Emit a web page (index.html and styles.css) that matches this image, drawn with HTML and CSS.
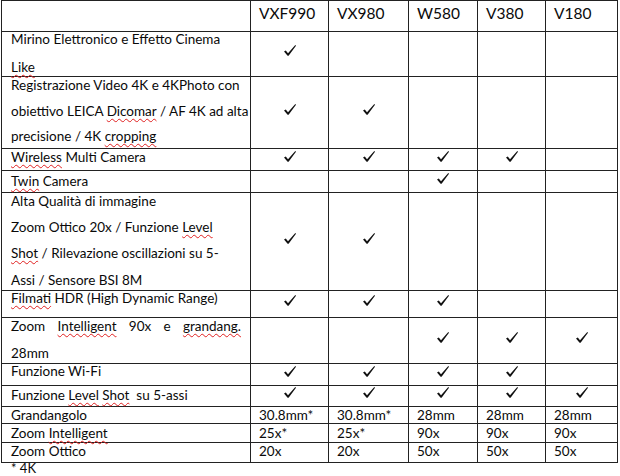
FILE: index.html
```html
<!DOCTYPE html>
<html lang="it">
<head>
<meta charset="utf-8">
<title>Confronto modelli</title>
<link rel="stylesheet" href="styles.css">
</head>
<body>
<div class="sheet">
  <div class="grid">
    <div class="c hd"></div>
    <div class="c hd"><div class="t">VXF990</div></div>
    <div class="c hd"><div class="t">VX980</div></div>
    <div class="c hd"><div class="t">W580</div></div>
    <div class="c hd"><div class="t">V380</div></div>
    <div class="c hd"><div class="t">V180</div></div>

    <div class="c r1"><div class="t">Mirino Elettronico e Effetto Cinema<br><span class="sp">Like</span></div></div>
    <div class="c k"><svg class="ck" viewBox="0 0 12 11"><path d="M0 6.5 L1.8 5.5 L4 8.2 L11.3 0 L12 0.7 L4.6 10.8 L3.6 10.8 Z"/></svg></div>
    <div class="c"></div><div class="c"></div><div class="c"></div><div class="c"></div>

    <div class="c r2"><div class="t">Registrazione Video 4K e 4KPhoto con<br>obiettivo LEICA <span class="sp">Dicomar</span> / AF 4K ad alta<br>precisione / 4K <span class="sp">cropping</span></div></div>
    <div class="c k"><svg class="ck" viewBox="0 0 12 11"><path d="M0 6.5 L1.8 5.5 L4 8.2 L11.3 0 L12 0.7 L4.6 10.8 L3.6 10.8 Z"/></svg></div>
    <div class="c k"><svg class="ck" viewBox="0 0 12 11"><path d="M0 6.5 L1.8 5.5 L4 8.2 L11.3 0 L12 0.7 L4.6 10.8 L3.6 10.8 Z"/></svg></div>
    <div class="c"></div><div class="c"></div><div class="c"></div>

    <div class="c r3"><div class="t"><span class="sp">Wireless</span> Multi Camera</div></div>
    <div class="c k"><svg class="ck" viewBox="0 0 12 11"><path d="M0 6.5 L1.8 5.5 L4 8.2 L11.3 0 L12 0.7 L4.6 10.8 L3.6 10.8 Z"/></svg></div>
    <div class="c k"><svg class="ck" viewBox="0 0 12 11"><path d="M0 6.5 L1.8 5.5 L4 8.2 L11.3 0 L12 0.7 L4.6 10.8 L3.6 10.8 Z"/></svg></div>
    <div class="c k"><svg class="ck" viewBox="0 0 12 11"><path d="M0 6.5 L1.8 5.5 L4 8.2 L11.3 0 L12 0.7 L4.6 10.8 L3.6 10.8 Z"/></svg></div>
    <div class="c k"><svg class="ck" viewBox="0 0 12 11"><path d="M0 6.5 L1.8 5.5 L4 8.2 L11.3 0 L12 0.7 L4.6 10.8 L3.6 10.8 Z"/></svg></div>
    <div class="c"></div>

    <div class="c r4"><div class="t"><span class="sp">Twin</span> Camera</div></div>
    <div class="c"></div><div class="c"></div>
    <div class="c k"><svg class="ck" viewBox="0 0 12 11"><path d="M0 6.5 L1.8 5.5 L4 8.2 L11.3 0 L12 0.7 L4.6 10.8 L3.6 10.8 Z"/></svg></div>
    <div class="c"></div><div class="c"></div>

    <div class="c r5"><div class="t">Alta Qualità di immagine<br>Zoom Ottico 20x / Funzione <span class="sp">Level</span><br><span class="sp">Shot</span> / Rilevazione oscillazioni su 5-<br>Assi / Sensore BSI 8M</div></div>
    <div class="c k"><svg class="ck" viewBox="0 0 12 11"><path d="M0 6.5 L1.8 5.5 L4 8.2 L11.3 0 L12 0.7 L4.6 10.8 L3.6 10.8 Z"/></svg></div>
    <div class="c k"><svg class="ck" viewBox="0 0 12 11"><path d="M0 6.5 L1.8 5.5 L4 8.2 L11.3 0 L12 0.7 L4.6 10.8 L3.6 10.8 Z"/></svg></div>
    <div class="c"></div><div class="c"></div><div class="c"></div>

    <div class="c r6"><div class="t"><span class="sp">Filmati</span> HDR (High Dynamic Range)</div></div>
    <div class="c k"><svg class="ck" viewBox="0 0 12 11"><path d="M0 6.5 L1.8 5.5 L4 8.2 L11.3 0 L12 0.7 L4.6 10.8 L3.6 10.8 Z"/></svg></div>
    <div class="c k"><svg class="ck" viewBox="0 0 12 11"><path d="M0 6.5 L1.8 5.5 L4 8.2 L11.3 0 L12 0.7 L4.6 10.8 L3.6 10.8 Z"/></svg></div>
    <div class="c k"><svg class="ck" viewBox="0 0 12 11"><path d="M0 6.5 L1.8 5.5 L4 8.2 L11.3 0 L12 0.7 L4.6 10.8 L3.6 10.8 Z"/></svg></div>
    <div class="c"></div><div class="c"></div>

    <div class="c r7"><div class="t"><div class="just">Zoom <span class="sp">Intelligent</span> 90x e <span class="sp">grandang.</span></div><div>28mm</div></div></div>
    <div class="c"></div><div class="c"></div>
    <div class="c k"><svg class="ck" viewBox="0 0 12 11"><path d="M0 6.5 L1.8 5.5 L4 8.2 L11.3 0 L12 0.7 L4.6 10.8 L3.6 10.8 Z"/></svg></div>
    <div class="c k"><svg class="ck" viewBox="0 0 12 11"><path d="M0 6.5 L1.8 5.5 L4 8.2 L11.3 0 L12 0.7 L4.6 10.8 L3.6 10.8 Z"/></svg></div>
    <div class="c k"><svg class="ck" viewBox="0 0 12 11"><path d="M0 6.5 L1.8 5.5 L4 8.2 L11.3 0 L12 0.7 L4.6 10.8 L3.6 10.8 Z"/></svg></div>

    <div class="c r8"><div class="t">Funzione Wi-Fi</div></div>
    <div class="c k"><svg class="ck" viewBox="0 0 12 11"><path d="M0 6.5 L1.8 5.5 L4 8.2 L11.3 0 L12 0.7 L4.6 10.8 L3.6 10.8 Z"/></svg></div>
    <div class="c k"><svg class="ck" viewBox="0 0 12 11"><path d="M0 6.5 L1.8 5.5 L4 8.2 L11.3 0 L12 0.7 L4.6 10.8 L3.6 10.8 Z"/></svg></div>
    <div class="c k"><svg class="ck" viewBox="0 0 12 11"><path d="M0 6.5 L1.8 5.5 L4 8.2 L11.3 0 L12 0.7 L4.6 10.8 L3.6 10.8 Z"/></svg></div>
    <div class="c k"><svg class="ck" viewBox="0 0 12 11"><path d="M0 6.5 L1.8 5.5 L4 8.2 L11.3 0 L12 0.7 L4.6 10.8 L3.6 10.8 Z"/></svg></div>
    <div class="c"></div>

    <div class="c r9"><div class="t">Funzione <span class="sp">Level</span> <span class="sp">Shot</span> &nbsp;su 5-assi</div></div>
    <div class="c k"><svg class="ck" viewBox="0 0 12 11"><path d="M0 6.5 L1.8 5.5 L4 8.2 L11.3 0 L12 0.7 L4.6 10.8 L3.6 10.8 Z"/></svg></div>
    <div class="c k"><svg class="ck" viewBox="0 0 12 11"><path d="M0 6.5 L1.8 5.5 L4 8.2 L11.3 0 L12 0.7 L4.6 10.8 L3.6 10.8 Z"/></svg></div>
    <div class="c k"><svg class="ck" viewBox="0 0 12 11"><path d="M0 6.5 L1.8 5.5 L4 8.2 L11.3 0 L12 0.7 L4.6 10.8 L3.6 10.8 Z"/></svg></div>
    <div class="c k"><svg class="ck" viewBox="0 0 12 11"><path d="M0 6.5 L1.8 5.5 L4 8.2 L11.3 0 L12 0.7 L4.6 10.8 L3.6 10.8 Z"/></svg></div>
    <div class="c k"><svg class="ck" viewBox="0 0 12 11"><path d="M0 6.5 L1.8 5.5 L4 8.2 L11.3 0 L12 0.7 L4.6 10.8 L3.6 10.8 Z"/></svg></div>

    <div class="c r10"><div class="t">Grandangolo</div></div>
    <div class="c r10"><div class="t">30.8mm*</div></div>
    <div class="c r10"><div class="t">30.8mm*</div></div>
    <div class="c r10"><div class="t">28mm</div></div>
    <div class="c r10"><div class="t">28mm</div></div>
    <div class="c r10"><div class="t">28mm</div></div>

    <div class="c r11"><div class="t">Zoom <span class="sp">Intelligent</span></div></div>
    <div class="c r11"><div class="t">25x*</div></div>
    <div class="c r11"><div class="t">25x*</div></div>
    <div class="c r11"><div class="t">90x</div></div>
    <div class="c r11"><div class="t">90x</div></div>
    <div class="c r11"><div class="t">90x</div></div>

    <div class="c r12"><div class="t">Zoom Ottico</div></div>
    <div class="c r12"><div class="t">20x</div></div>
    <div class="c r12"><div class="t">20x</div></div>
    <div class="c r12"><div class="t">50x</div></div>
    <div class="c r12"><div class="t">50x</div></div>
    <div class="c r12"><div class="t">50x</div></div>
  </div>
  <p class="note">* 4K</p>
</div>
</body>
</html>
```
FILE: styles.css
```css
html, body {
  margin: 0;
  padding: 0;
  background: #ffffff;
}

body {
  font-family: Lato, "Liberation Sans", sans-serif;
  font-size: 13.5px;
  color: #0a0a0a;
}

.sheet {
  width: 620px;
}

.grid {
  display: grid;
  grid-template-columns: 249px 78px 80px 69px 68px 72px;
  grid-template-rows: 31px 45px 72px 22px 22px 98px 27px 46px 22px 21px 17px 19px 20px;
  margin-left: 1px;
  width: 617px;
  box-sizing: border-box;
  border-top: 1px solid #222;
  border-left: 1px solid #222;
}

.c {
  box-sizing: border-box;
  border-right: 1px solid #222;
  border-bottom: 1px solid #222;
  padding: 0 9px 0 8px;
  min-width: 0;
  --lh: 20px;
  --off: 0px;
}

.c:nth-child(6n+1) {
  padding-left: 9px;
}

.t {
  line-height: var(--lh);
  margin-top: var(--off);
  white-space: nowrap;
}

.hd {
  font-size: 15.5px;
  --lh: 20px;
  --off: 2px;
}

.r1 { --lh: 27.5px; --off: -6px; }
.r2 { --lh: 25.5px; --off: -4px; }
.r3 { --off: -2px; }
.r4 { --off: 0px; }
.r5 { --lh: 26.2px; --off: -5px; }
.r6 { --off: -3px; }
.r7 { --lh: 27px; --off: -5px; }
.r8 { --off: -3px; }
.r9 { --off: -1px; }
.r10 { --lh: 18px; --off: -1px; }
.r11 { --lh: 18px; --off: 0px; }
.r12 { --lh: 18px; --off: -1px; }

.just {
  text-align: justify;
  text-align-last: justify;
}

.sp {
  text-decoration-line: underline;
  text-decoration-style: wavy;
  text-decoration-color: #e02020;
  text-decoration-thickness: 1px;
  text-underline-offset: 2px;
}

.k {
  display: flex;
  align-items: center;
  justify-content: center;
  padding: 0 0 7px 0;
}

.c.k:nth-child(6n+1) {
  padding-left: 0;
}

.ck {
  width: 12px;
  height: 11px;
  fill: #111111;
  display: block;
}

.note {
  margin: -1px 0 0 0;
  padding-left: 11px;
  line-height: 12px;
  font-size: 13px;
}
```
